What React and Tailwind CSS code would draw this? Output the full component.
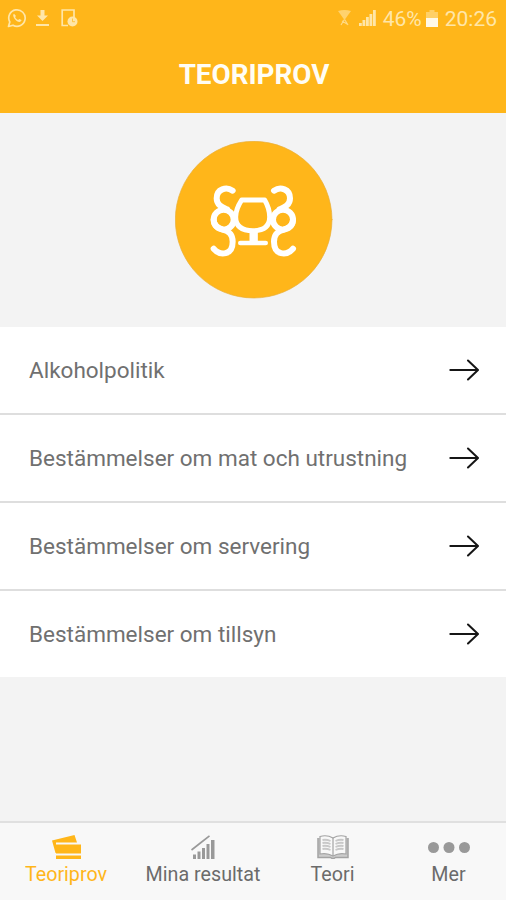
import React from 'react';

const topics = [
  'Alkoholpolitik',
  'Bestämmelser om mat och utrustning',
  'Bestämmelser om servering',
  'Bestämmelser om tillsyn',
];

const StatusBar = () => (
  <div className="flex h-9 items-center justify-between pl-[7px] pr-[9px] text-[#ffe6a8]">
    <div className="flex items-center">
      <svg className="h-5 w-5" viewBox="0 0 20 20" fill="none" stroke="currentColor" strokeWidth="1.7">
        <path d="M1.5 18.5 2.8 14A8.2 8.2 0 1 1 6 17.2Z" strokeLinejoin="round" />
        <path d="M7 5.8c-1.2.8-1 2.6.2 4.4 1.5 2.2 3.7 3.9 5.5 3.7 1-.1 1.7-.8 1.8-1.8l-2.2-1.2-1.2 1.2C9.7 11.5 8.7 10.5 8.1 9.1L9 8Z" fill="currentColor" stroke="none" />
      </svg>
      <svg className="ml-[9px] h-4 w-[13px]" viewBox="0 0 13 16" fill="currentColor">
        <path d="M4.5 0h4v5.5H12L6.5 11 1 5.5h3.5ZM0 14h13v2H0Z" />
      </svg>
      <svg className="ml-[12px] h-[18px] w-[17px]" viewBox="0 0 17 18" fill="none" stroke="currentColor" strokeWidth="1.7">
        <path d="M7 16.5H1.2V1H13v7" />
        <circle cx="11.5" cy="12.5" r="5" fill="currentColor" stroke="none" />
        <path d="M11.5 9.5v3.2H14" stroke="#ffb61a" strokeWidth="1" opacity=".7" />
      </svg>
    </div>
    <div className="flex items-center">
      <svg className="h-4 w-[13px]" viewBox="0 0 13 16" fill="currentColor" opacity=".75">
        <path d="M0 1Q6.5-1 13 1L6.5 10Z" opacity=".8" />
        <path d="m3 15 3-5h1l3 5M4 11l5 3" fill="none" stroke="currentColor" strokeWidth="1.2" />
      </svg>
      <svg className="ml-2 h-4 w-[17px]" viewBox="0 0 17 16" fill="currentColor">
        <path d="M0 13h2.8v3H0ZM3.5 10h2.8v6H3.5ZM7 7h2.8v9H7ZM10.5 4h2.8v12h-2.8ZM14 0h2.8v16H14Z" />
      </svg>
      <span className="ml-[7px] pt-[2px] text-[21px] leading-9">46%</span>
      <svg className="ml-[4px] h-[17px] w-3" viewBox="0 0 12 17" fill="currentColor">
        <path d="M3.5 0h5v2H12v7H0V2h3.5Z" opacity=".55" />
        <path d="M0 8h12v9H0Z" fill="#fff9e8" />
      </svg>
      <span className="ml-[7px] pt-[2px] text-[21px] leading-9">20:26</span>
    </div>
  </div>
);

const Logo = () => (
  <svg className="ml-px h-[158px] w-[158px]" viewBox="30 32 474 474" fill="none" stroke="#fff" strokeLinecap="round" strokeLinejoin="round">
    <circle cx="266" cy="268" r="235" fill="#ffb61a" stroke="#e8ad36" strokeWidth="2" />
    <g strokeWidth="18">
      <path d="M203 181C184 168 155 176 155 204C155 224 170 230 186 237" />
      <circle cx="176" cy="268" r="30" />
      <path d="M146 268C146 286 158 293 174 298C192 303 203 312 203 334C203 375 166 378 146 355" />
      <path d="M327 181C346 168 375 176 375 204C375 224 360 230 344 237" />
      <circle cx="354" cy="268" r="30" />
      <path d="M384 268C384 286 372 293 356 298C338 303 327 312 327 334C327 375 364 378 384 355" />
    </g>
    <path d="M230 209H299C309 226 314 242 314 260C314 286 300 301 264 301C228 301 212 286 212 260C212 242 219 226 230 209Z" strokeWidth="15" />
    <path d="M266 300V334" strokeWidth="25" strokeLinecap="butt" />
    <path d="M226 338H302" strokeWidth="14" />
  </svg>
);

const Arrow = () => (
  <svg className="h-[22px] w-[30px]" viewBox="0 0 30 22" fill="none" stroke="#161616" strokeWidth="2" strokeLinecap="round" strokeLinejoin="round">
    <path d="M1.300 11H28.500M19 1.500 29 11 19 20.500" />
  </svg>
);

const CardsIcon = () => (
  <svg className="h-6 w-[29px]" viewBox="0 0 29 24" fill="currentColor">
    <path d="M0 5.5 22.5 0 25 7.5H4V18H3.5Z" />
    <path d="M4 9.5h25v9H4ZM4 20.5h25V24H4Z" />
  </svg>
);

const ChartIcon = () => (
  <svg className="h-6 w-6" viewBox="0 0 24 24" fill="#999">
    <path d="M2 19.5h3V24H2ZM6.5 16.5h3V24h-3ZM11 13h3v11h-3ZM15.5 9h3v15h-3ZM20 5h3.5v19H20Z" />
    <path d="M.5 15 10 7.5 18.5.8" fill="none" stroke="#999" strokeWidth="1.6" />
  </svg>
);

const BookIcon = () => (
  <svg className="h-6 w-8" viewBox="0 0 32 24" fill="none" stroke="#a3a3a3">
    <path d="M1 3v19.5h12.5Q16 24.5 18.5 22.5H31V3" fill="#ccc" strokeWidth="1.5" />
    <path d="M16 3Q10-.5 3 1.5V19q7-1.5 13 2 6-3.5 13-2V1.5Q22-.5 16 3Z" fill="#f8f8f8" strokeWidth="1.2" />
    <path d="M16 3v18" strokeWidth="1.2" />
    <path d="M5.5 5q4-.8 8 1M5.5 8q4-.8 8 1M5.5 11q4-.8 8 1M5.5 14q4-.8 8 1M18.5 6q4-1.8 8-1M18.5 9q4-1.8 8-1M18.5 12q4-1.8 8-1M18.5 15q4-1.8 8-1" stroke="#c8c8c8" strokeWidth="1.8" />
  </svg>
);

const DotsIcon = () => (
  <svg className="h-6 w-[42px]" viewBox="0 0 42 24" fill="#999">
    <circle cx="5.5" cy="12.5" r="5.5" />
    <circle cx="21" cy="12.5" r="5.5" />
    <circle cx="36.5" cy="12.5" r="5.5" />
  </svg>
);

const Tab = ({ label, icon, className }) => (
  <button className={`flex flex-col items-center ${className}`}>
    {icon}
    <span className="mt-1 whitespace-nowrap text-[19.7px] leading-6">{label}</span>
  </button>
);

const App = () => {
  return (
    <div className="flex h-[900px] w-[506px] flex-col overflow-hidden bg-[#f3f3f3] font-[Roboto,sans-serif]">
      <header className="h-[113px] shrink-0 bg-[#ffb61a]">
        <StatusBar />
        <h1 className="mt-[23px] pl-[2px] text-center text-[27.8px] font-bold leading-8 text-[#fffdf5]">TEORIPROV</h1>
      </header>

      <div className="flex h-[214px] shrink-0 justify-center pt-[28px]">
        <Logo />
      </div>

      <ul className="divide-y-2 divide-[#dedede] bg-white">
        {topics.map(topic => (
          <li key={topic} className="flex h-[88px] items-center justify-between pl-[29px] pr-[27px] last:h-[86px]">
            <span className="pt-[2px] text-[22.5px] text-[#707070]">{topic}</span>
            <Arrow />
          </li>
        ))}
      </ul>

      <nav className="mt-auto flex h-[79px] shrink-0 border-t-2 border-[#e0e0e0] bg-[#f8f8f8] pt-3 text-[#6b6b6b]">
        <Tab label="Teoriprov" icon={<CardsIcon />} className="w-[132px] text-[#ffb61a]" />
        <Tab label="Mina resultat" icon={<ChartIcon />} className="w-[142px]" />
        <Tab label="Teori" icon={<BookIcon />} className="w-[117px]" />
        <Tab label="Mer" icon={<DotsIcon />} className="w-[115px]" />
      </nav>
    </div>
  );
};

export default App;
